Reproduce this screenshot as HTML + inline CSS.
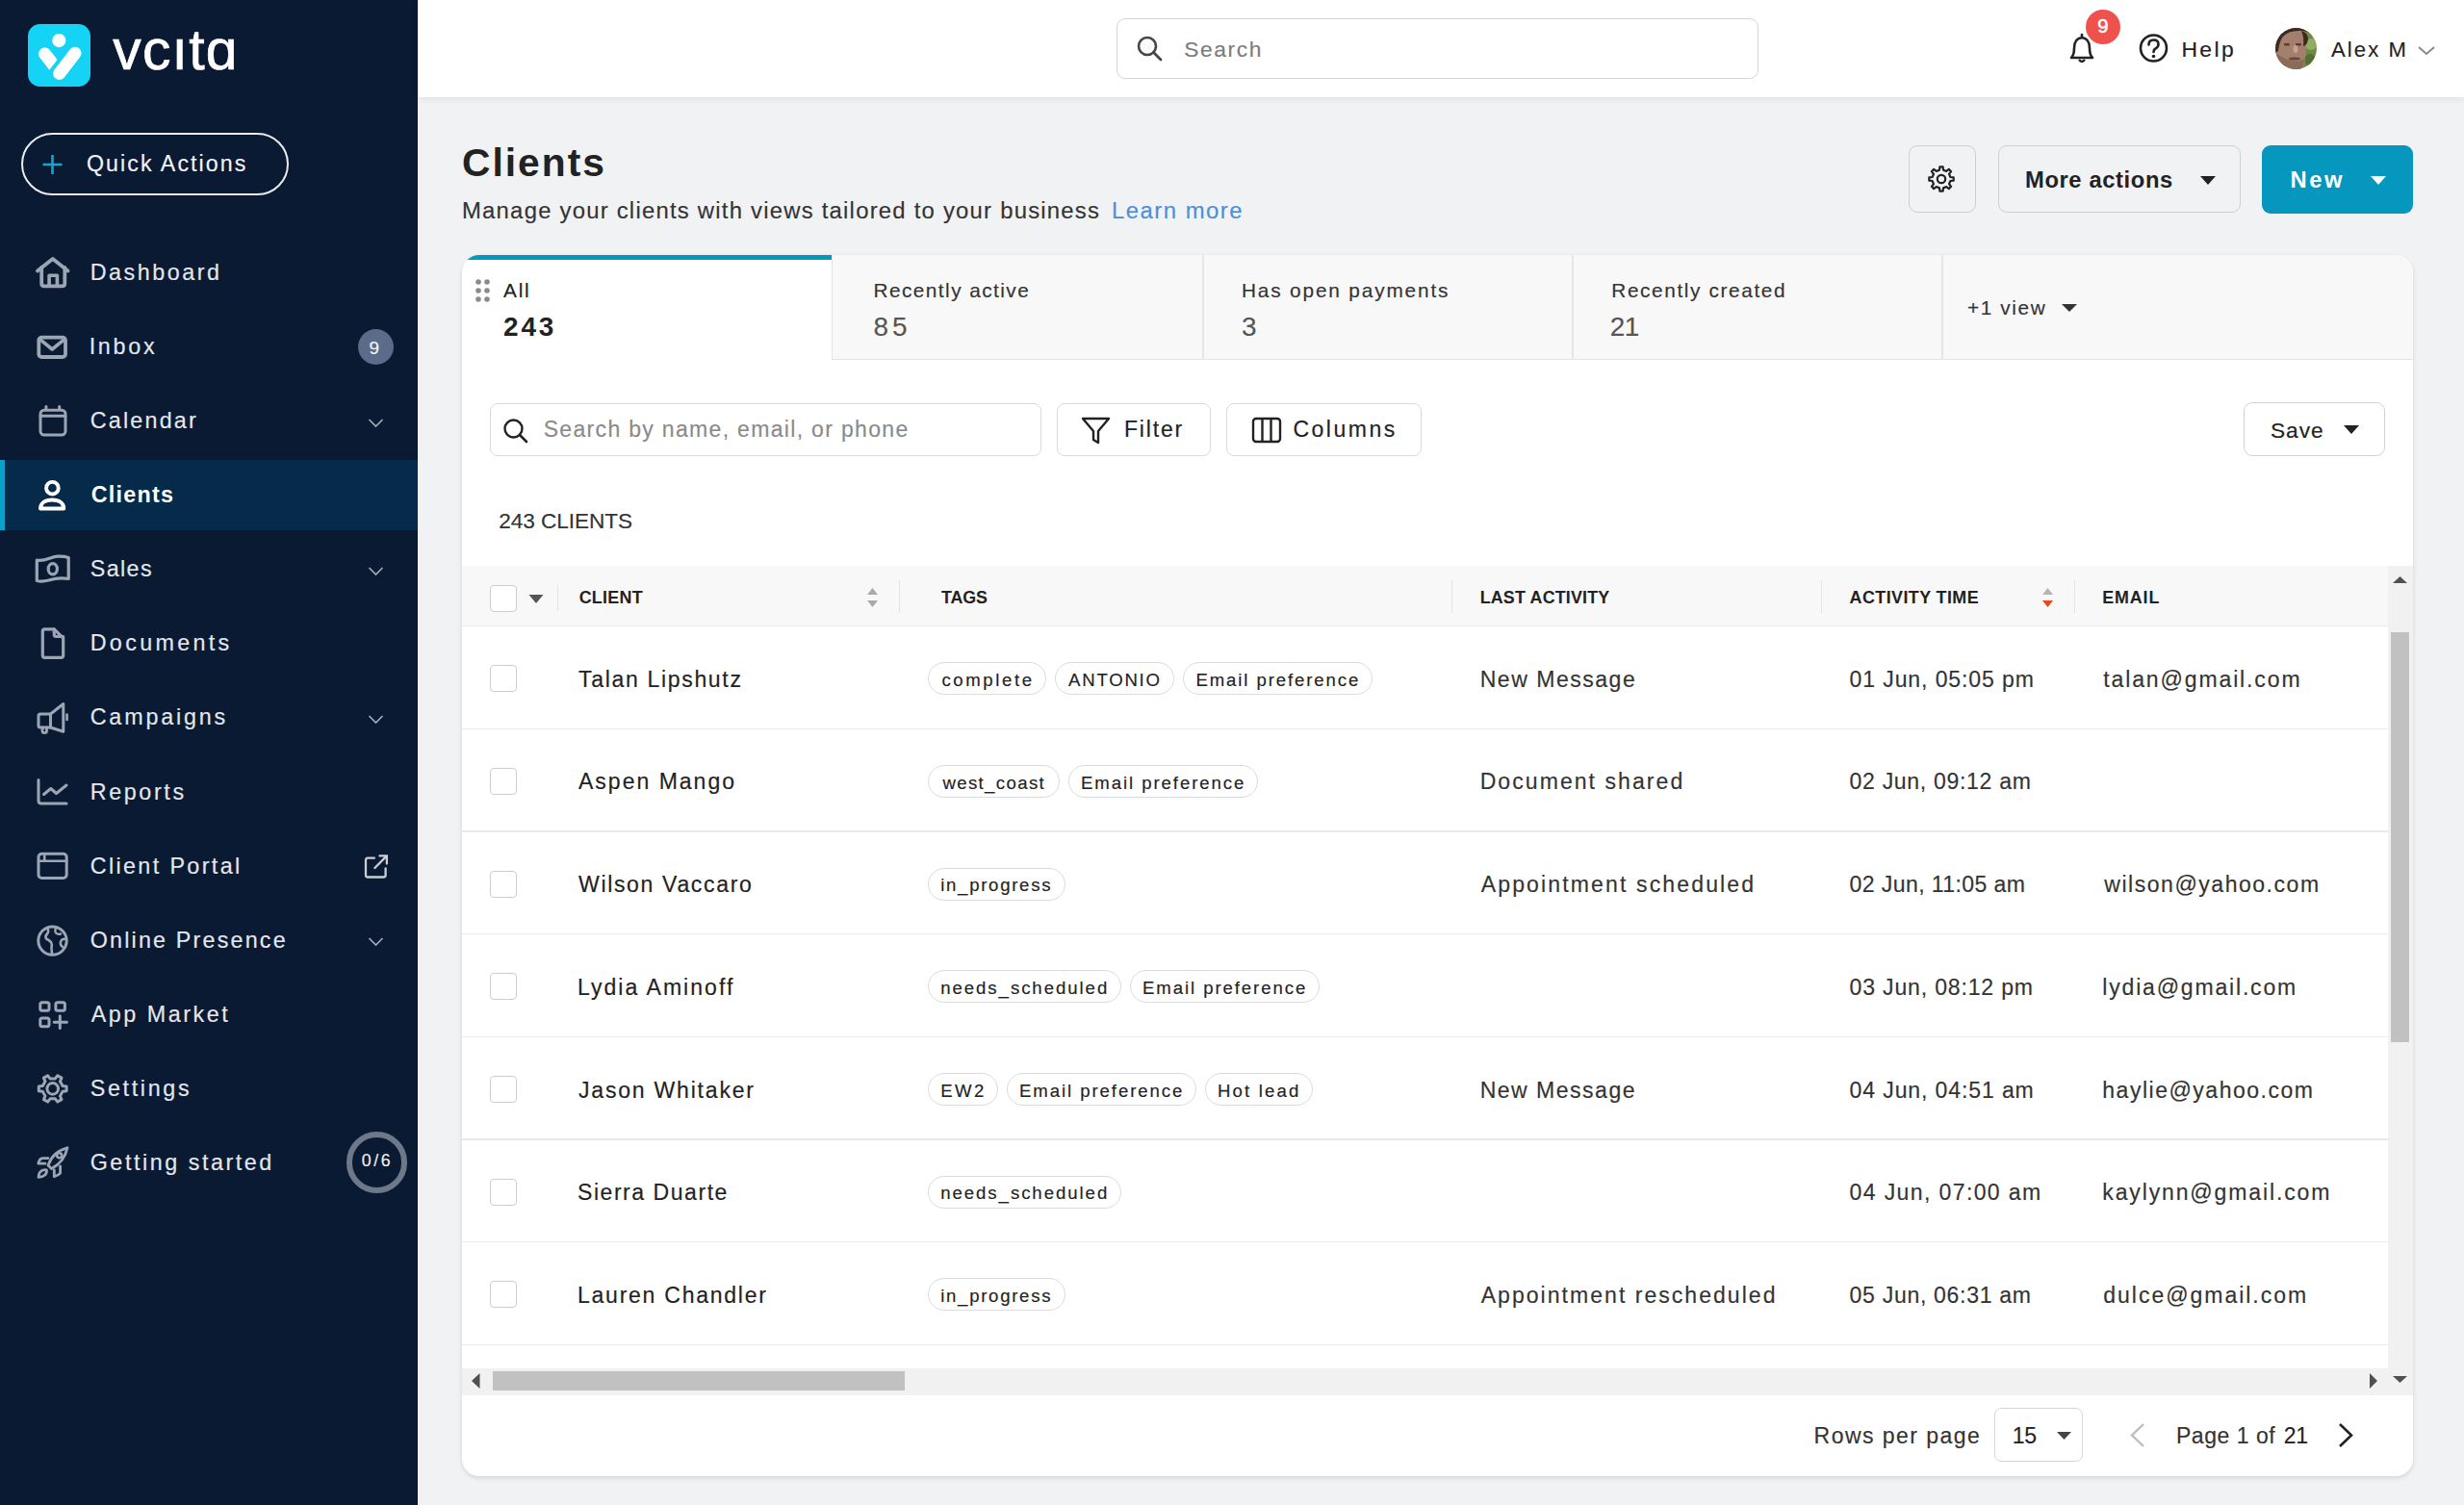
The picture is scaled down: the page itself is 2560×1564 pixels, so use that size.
<!DOCTYPE html>
<html><head><meta charset="utf-8"><title>Clients</title>
<style>
html,body{margin:0;padding:0;}
body{width:2560px;height:1564px;position:relative;overflow:hidden;background:#f1f2f4;font-family:"Liberation Sans",sans-serif;}
.t{position:absolute;line-height:1;white-space:pre;}
</style></head><body>
<div style="position:absolute;left:0px;top:0px;width:434px;height:1564px;background:#0a1a33"></div>
<div style="position:absolute;left:29px;top:25px;width:65px;height:65.3px;background:#15d3f4;border-radius:12.5px"></div>
<svg style="position:absolute;left:29px;top:25px;" width="65" height="65" viewBox="0 0 65 65" fill="none"><defs><clipPath id="lc"><polygon points="62.75,-4.8 -10.45,90.2 -57.97,53.6 15.23,-41.4"/></clipPath></defs><circle cx="32.3" cy="17.1" r="7.1" fill="#fff"/><path d="M17.6 31 L30 47" stroke="#fff" stroke-width="13" stroke-linecap="round" clip-path="url(#lc)"/><path d="M32.6 51.4 L49 30.2" stroke="#fff" stroke-width="13" stroke-linecap="round"/></svg>
<div class="t" style="left:117.20px;top:23.48px;font-size:58.96px;font-weight:400;color:#ffffff;letter-spacing:1.228px;-webkit-text-stroke:0.7px #fff;">vcıtɑ</div>
<div style="position:absolute;left:22px;top:138px;width:278px;height:65px;border:2.5px solid #e9edf2;border-radius:33px;box-sizing:border-box"></div>
<svg style="position:absolute;left:43px;top:160px;" width="23" height="22" viewBox="0 0 23 22" fill="none"><path d="M11.5 1 V21 M1.5 11 H21.5" stroke="#1aa3d0" stroke-width="2.6"/></svg>
<div class="t" style="left:90.00px;top:158.97px;font-size:23.18px;font-weight:400;color:#f2f4f7;letter-spacing:2.077px;-webkit-text-stroke:0.15px #f2f4f7;">Quick Actions</div>
<div style="position:absolute;left:0px;top:478px;width:434px;height:73px;background:#062a49"></div>
<div style="position:absolute;left:0px;top:478px;width:5px;height:73px;background:#0aa2c9"></div>
<div class="t" style="left:93.70px;top:272.30px;font-size:23.32px;font-weight:400;color:#e4e8ee;letter-spacing:2.527px;-webkit-text-stroke:0.15px #e4e8ee;">Dashboard</div>
<div class="t" style="left:92.70px;top:349.33px;font-size:23.32px;font-weight:400;color:#e4e8ee;letter-spacing:2.707px;-webkit-text-stroke:0.15px #e4e8ee;">Inbox</div>
<div class="t" style="left:93.70px;top:426.36px;font-size:23.32px;font-weight:400;color:#e4e8ee;letter-spacing:2.208px;-webkit-text-stroke:0.15px #e4e8ee;">Calendar</div>
<div class="t" style="left:94.70px;top:503.39px;font-size:23.32px;font-weight:700;color:#ffffff;letter-spacing:1.257px;">Clients</div>
<div class="t" style="left:93.70px;top:580.42px;font-size:23.32px;font-weight:400;color:#e4e8ee;letter-spacing:1.410px;-webkit-text-stroke:0.15px #e4e8ee;">Sales</div>
<div class="t" style="left:93.70px;top:657.45px;font-size:23.32px;font-weight:400;color:#e4e8ee;letter-spacing:3.331px;-webkit-text-stroke:0.15px #e4e8ee;">Documents</div>
<div class="t" style="left:93.70px;top:734.48px;font-size:23.32px;font-weight:400;color:#e4e8ee;letter-spacing:2.830px;-webkit-text-stroke:0.15px #e4e8ee;">Campaigns</div>
<div class="t" style="left:93.70px;top:811.51px;font-size:23.32px;font-weight:400;color:#e4e8ee;letter-spacing:2.638px;-webkit-text-stroke:0.15px #e4e8ee;">Reports</div>
<div class="t" style="left:93.70px;top:888.54px;font-size:23.32px;font-weight:400;color:#e4e8ee;letter-spacing:2.375px;-webkit-text-stroke:0.15px #e4e8ee;">Client Portal</div>
<div class="t" style="left:93.70px;top:965.57px;font-size:23.32px;font-weight:400;color:#e4e8ee;letter-spacing:2.187px;-webkit-text-stroke:0.15px #e4e8ee;">Online Presence</div>
<div class="t" style="left:94.70px;top:1042.60px;font-size:23.32px;font-weight:400;color:#e4e8ee;letter-spacing:2.530px;-webkit-text-stroke:0.15px #e4e8ee;">App Market</div>
<div class="t" style="left:93.70px;top:1119.63px;font-size:23.32px;font-weight:400;color:#e4e8ee;letter-spacing:2.660px;-webkit-text-stroke:0.15px #e4e8ee;">Settings</div>
<div class="t" style="left:93.70px;top:1196.66px;font-size:23.32px;font-weight:400;color:#e4e8ee;letter-spacing:2.547px;-webkit-text-stroke:0.15px #e4e8ee;">Getting started</div>
<svg style="position:absolute;left:0;top:0" width="434" height="1564" viewBox="0 0 434 1564"><path d="M39 281.5 L54.8 269 L70.5 281.5" stroke="#9ca5b4" stroke-linecap="round" stroke-linejoin="round" fill="none" stroke-width="3.8"/><path d="M43.2 278 V294.5 Q43.2 297.3 46 297.3 H64.5 Q67.3 297.3 67.3 294.5 V278" stroke="#9ca5b4" stroke-linecap="round" stroke-linejoin="round" fill="none" stroke-width="3.8"/><path d="M51.1 297.3 V286.3 H59.4 V297.3" stroke="#9ca5b4" stroke-linecap="round" stroke-linejoin="round" fill="none" stroke-width="3.6"/><rect x="40.3" y="350.6" width="27.7" height="20.4" rx="3" stroke="#9ca5b4" stroke-linecap="round" stroke-linejoin="round" fill="none" stroke-width="3.8"/><path d="M41.8 352.8 L54.2 363 L66.6 352.8" stroke="#9ca5b4" stroke-linecap="round" stroke-linejoin="round" fill="none" stroke-width="3.6"/><rect x="42" y="426.2" width="26" height="25.9" rx="4" stroke="#9ca5b4" stroke-linecap="round" stroke-linejoin="round" fill="none" stroke-width="3"/><path d="M42 432.3 H68 M47.9 422.6 V425.5 M61.7 422.6 V425.5" stroke="#9ca5b4" stroke-linecap="round" stroke-linejoin="round" fill="none" stroke-width="3"/><circle cx="54.4" cy="507.2" r="6.3" stroke="#fff" stroke-width="3.9" fill="none"/><path d="M42 528.5 C42 522.5 47 519.5 54.2 519.5 C61.3 519.5 66.3 522.5 66.3 528.5 Z" stroke="#fff" stroke-width="3.9" stroke-linejoin="round" fill="none"/><path d="M38.3 582 C46 584 53 578.5 60 578.2 C65 578 68.5 578.6 71.2 579.5 V601.5 C64 600 57 601 50.5 603 C45 604.5 41 604.2 38.3 603.5 Z" stroke="#9ca5b4" stroke-linecap="round" stroke-linejoin="round" fill="none" stroke-width="3.2"/><ellipse cx="54.8" cy="591.3" rx="4.6" ry="5.6" stroke="#9ca5b4" stroke-linecap="round" stroke-linejoin="round" fill="none" stroke-width="3.2"/><path d="M44.3 656 Q44.3 653.8 46.5 653.8 H56.3 L65.7 663.2 V681 Q65.7 683.4 63.3 683.4 H46.5 Q44.3 683.4 44.3 681 Z" stroke="#9ca5b4" stroke-linecap="round" stroke-linejoin="round" fill="none" stroke-width="3.2"/><path d="M56.3 653.8 V659.5 Q56.3 661.5 58.3 661.5 H65.7" stroke="#9ca5b4" stroke-linecap="round" stroke-linejoin="round" fill="none" stroke-width="3.2"/><path d="M42 742 H52.5 V756 H42 Q40 756 40 754 V744 Q40 742 42 742 Z" stroke="#9ca5b4" stroke-linecap="round" stroke-linejoin="round" fill="none" stroke-width="3"/><path d="M52.5 742 L65.8 731.5 V760.2 L52.5 756" stroke="#9ca5b4" stroke-linecap="round" stroke-linejoin="round" fill="none" stroke-width="3"/><path d="M69.6 742.5 V748" stroke="#9ca5b4" stroke-linecap="round" stroke-linejoin="round" fill="none" stroke-width="2.6"/><path d="M44 756 V759.8 Q44 761.6 46.2 761.6 Q48.5 761.6 48.5 759.8 V756" stroke="#9ca5b4" stroke-linecap="round" stroke-linejoin="round" fill="none" stroke-width="2.8"/><path d="M40 810.5 V832 Q40 835 43 835 H69" stroke="#9ca5b4" stroke-linecap="round" stroke-linejoin="round" fill="none" stroke-width="3"/><path d="M45.5 825.5 L52.8 819.5 L58.5 824.5 L69 816" stroke="#9ca5b4" stroke-linecap="round" stroke-linejoin="round" fill="none" stroke-width="3"/><rect x="40" y="887.3" width="29.2" height="25.2" rx="3.5" stroke="#9ca5b4" stroke-linecap="round" stroke-linejoin="round" fill="none" stroke-width="3"/><path d="M40 894.8 H69.2 M46.2 887.5 V894.8" stroke="#9ca5b4" stroke-linecap="round" stroke-linejoin="round" fill="none" stroke-width="2.6"/><circle cx="54.5" cy="977.6" r="14.7" stroke="#9ca5b4" stroke-linecap="round" stroke-linejoin="round" fill="none" stroke-width="3"/><path d="M49.5 964.5 Q51 968 49 970.5 Q46.5 973 48 975.5 Q51 977 53 979 Q54.5 982 53.5 985 L54 991.5" stroke="#9ca5b4" stroke-linecap="round" stroke-linejoin="round" fill="none" stroke-width="2.6"/><path d="M58.5 963.5 Q56.5 967 58 969.5 Q60 971.5 63 970.5" stroke="#9ca5b4" stroke-linecap="round" stroke-linejoin="round" fill="none" stroke-width="2.4"/><path d="M69 976 Q64.5 975 63 978.5 Q62 982 65 984" stroke="#9ca5b4" stroke-linecap="round" stroke-linejoin="round" fill="none" stroke-width="2.4"/><rect x="41.8" y="1041.7" width="9.2" height="8.6" rx="2" stroke="#9ca5b4" stroke-linecap="round" stroke-linejoin="round" fill="none" stroke-width="3"/><rect x="57.9" y="1041.7" width="9.5" height="8.6" rx="2" stroke="#9ca5b4" stroke-linecap="round" stroke-linejoin="round" fill="none" stroke-width="3"/><rect x="41.8" y="1058.1" width="9.2" height="8.6" rx="2" stroke="#9ca5b4" stroke-linecap="round" stroke-linejoin="round" fill="none" stroke-width="3"/><path d="M62.3 1055.8 V1068.6 M56.2 1062.2 H69.4" stroke="#9ca5b4" stroke-linecap="round" stroke-linejoin="round" fill="none" stroke-width="3"/><path d="M65.09 1128.47 L69.10 1129.00 L69.10 1133.80 L65.09 1134.33 L62.44 1138.94 L63.98 1142.67 L59.82 1145.07 L57.36 1141.87 L52.04 1141.87 L49.58 1145.07 L45.42 1142.67 L46.96 1138.94 L44.31 1134.33 L40.30 1133.80 L40.30 1129.00 L44.31 1128.47 L46.96 1123.86 L45.42 1120.13 L49.58 1117.73 L52.04 1120.93 L57.36 1120.93 L59.82 1117.73 L63.98 1120.13 L62.44 1123.86 Z" stroke="#9ca5b4" stroke-linecap="round" stroke-linejoin="round" fill="none" stroke-width="3"/><circle cx="54.7" cy="1131.4" r="5.8" stroke="#9ca5b4" stroke-linecap="round" stroke-linejoin="round" fill="none" stroke-width="3"/><path d="M50 1211 Q55 1196.5 70 1192.8 Q67 1207.5 53.5 1214.5 Z" stroke="#9ca5b4" stroke-linecap="round" stroke-linejoin="round" fill="none" stroke-width="2.8"/><circle cx="61.7" cy="1200.8" r="2.5" stroke="#9ca5b4" stroke-linecap="round" stroke-linejoin="round" fill="none" stroke-width="2.6"/><path d="M50 1203.6 H44.8 Q42 1203.6 40.8 1206.2 L39.8 1209.2 H47" stroke="#9ca5b4" stroke-linecap="round" stroke-linejoin="round" fill="none" stroke-width="2.8"/><path d="M56.3 1216 V1222.8 Q60 1221.5 62.6 1219.2 L62.6 1212" stroke="#9ca5b4" stroke-linecap="round" stroke-linejoin="round" fill="none" stroke-width="2.8"/><path d="M48.3 1215.8 Q44 1215 41.6 1218 Q39.8 1220.6 40 1223.4 Q44 1223.4 46.8 1221 Q49 1218.6 48.3 1215.8 Z" stroke="#9ca5b4" stroke-linecap="round" stroke-linejoin="round" fill="none" stroke-width="2.8"/></svg>
<svg style="position:absolute;left:382px;top:431.76px;" width="18" height="14.0" viewBox="0 0 18 14" fill="none"><path d="M1.5 4 L8.5 11 L15.5 4" stroke="#a3acb8" stroke-width="1.7" fill="none"/></svg>
<svg style="position:absolute;left:382px;top:585.8199999999999px;" width="18" height="14.0" viewBox="0 0 18 14" fill="none"><path d="M1.5 4 L8.5 11 L15.5 4" stroke="#a3acb8" stroke-width="1.7" fill="none"/></svg>
<svg style="position:absolute;left:382px;top:739.88px;" width="18" height="14.0" viewBox="0 0 18 14" fill="none"><path d="M1.5 4 L8.5 11 L15.5 4" stroke="#a3acb8" stroke-width="1.7" fill="none"/></svg>
<svg style="position:absolute;left:382px;top:970.97px;" width="18" height="14.0" viewBox="0 0 18 14" fill="none"><path d="M1.5 4 L8.5 11 L15.5 4" stroke="#a3acb8" stroke-width="1.7" fill="none"/></svg>
<div style="position:absolute;left:372px;top:342px;width:37px;height:37px;background:#5b6b8a;border-radius:50%"></div>
<div class="t" style="left:383.50px;top:353.04px;font-size:18.85px;font-weight:400;color:#f4f6f8;letter-spacing:0.000px;-webkit-text-stroke:0.15px #f4f6f8;">9</div>
<svg style="position:absolute;left:377px;top:887px;" width="28" height="28" viewBox="0 0 28 28" fill="none"><path d="M11.9 4.7 H5 Q3 4.7 3 6.7 V22.5 Q3 24.5 5 24.5 H21.6 Q23.6 24.5 23.6 22.5 V15.4" stroke="#c9ced6" stroke-width="2.3" fill="none" stroke-linecap="round"/><path d="M12.4 15 L24.9 2.4 M17.5 2.4 H24.9 V10.6" stroke="#c9ced6" stroke-width="2.3" fill="none" stroke-linecap="round"/></svg>
<div style="position:absolute;left:359.5px;top:1176.2px;width:63.5px;height:63.5px;border:6.3px solid #6d798b;border-radius:50%;box-sizing:border-box"></div>
<div class="t" style="left:375.80px;top:1198.48px;font-size:17.74px;font-weight:400;color:#eef1f5;letter-spacing:2.611px;-webkit-text-stroke:0.15px #eef1f5;">0/6</div>
<div style="position:absolute;left:434px;top:0px;width:2126px;height:101px;background:#ffffff;box-shadow:0 2px 8px rgba(0,0,0,0.07)"></div>
<div style="position:absolute;left:1160px;top:19px;width:667px;height:63px;border:1.5px solid #d6d6d6;border-radius:9px;box-sizing:border-box;background:#fff"></div>
<svg style="position:absolute;left:1180px;top:36px;" width="30" height="28" viewBox="0 0 30 28" fill="none"><circle cx="12" cy="12" r="9" stroke="#444" stroke-width="2.6" fill="none"/><path d="M18.5 18.5 L26 26" stroke="#444" stroke-width="2.8" stroke-linecap="round"/></svg>
<div class="t" style="left:1230.20px;top:40.22px;font-size:22.77px;font-weight:400;color:#7b7b7b;letter-spacing:1.614px;-webkit-text-stroke:0.15px #7b7b7b;">Search</div>
<svg style="position:absolute;left:2146px;top:32px;" width="34" height="36" viewBox="0 0 34 36" fill="none"><path d="M6 28 Q9 25 9 18 Q9 8 17 7 Q25 8 25 18 Q25 25 28 28 Z" stroke="#222" stroke-width="2.6" fill="none" stroke-linejoin="round"/><path d="M17 4 V7" stroke="#222" stroke-width="2.6" stroke-linecap="round"/><path d="M14 30 Q17 34 20 30" stroke="#222" stroke-width="2.4" fill="none"/></svg>
<div style="position:absolute;left:2167px;top:9.5px;width:36px;height:36.0px;background:#ef524c;border-radius:50%"></div>
<div class="t" style="left:2179.20px;top:17.35px;font-size:20.25px;font-weight:400;color:#ffffff;letter-spacing:0.000px;-webkit-text-stroke:0.5px #fff;">9</div>
<svg style="position:absolute;left:2220px;top:33px;" width="35" height="34" viewBox="0 0 35 34" fill="none"><circle cx="17.5" cy="17" r="13.5" stroke="#222" stroke-width="2.6" fill="none"/><path d="M12.5 13.5 Q12.5 8.5 17.5 8.5 Q22.5 8.5 22.5 13 Q22.5 16 19.5 17.5 Q17.5 18.5 17.5 21" stroke="#222" stroke-width="2.6" fill="none" stroke-linecap="round"/><circle cx="17.5" cy="25.5" r="1.8" fill="#222"/></svg>
<div class="t" style="left:2266.40px;top:40.31px;font-size:22.91px;font-weight:400;color:#222;letter-spacing:2.418px;-webkit-text-stroke:0.15px #222;">Help</div>
<svg style="position:absolute;left:2364px;top:29px;filter:blur(0.5px)" width="43" height="43" viewBox="0 0 43 43" fill="none"><defs><clipPath id="av"><circle cx="21.5" cy="21.5" r="21.4"/></clipPath></defs><g clip-path="url(#av)"><rect x="0" y="0" width="43" height="43" fill="#6d8a45"/><circle cx="37" cy="17" r="6" fill="#9fb36a" opacity="0.8"/><circle cx="36" cy="33" r="6" fill="#4e6a2c" opacity="0.8"/><path d="M0 0 H30 Q33 10 32 22 Q31 38 27 43 H0 Z" fill="#a3806e"/><path d="M0 26 Q4 38 12 43 H27 Q30 38 30 32 Q22 37 13 33 Q6 30 0 26 Z" fill="#8a6a58"/><path d="M0 0 H43 V12 Q38 4 28 3 Q14 2 8 9 Q4 14 3 24 L0 26 Z" fill="#3a2a22"/><path d="M27 3 Q34 5 34 12 Q33 18 29 19 Q30 10 27 3 Z" fill="#3a2a22"/><rect x="9" y="16" width="6" height="2.5" rx="1" fill="#5a3e33"/><rect x="21" y="16" width="6" height="2.5" rx="1" fill="#5a3e33"/><ellipse cx="21" cy="22" rx="2.5" ry="4" fill="#caa190"/><ellipse cx="20" cy="32" rx="6" ry="1.6" fill="#6b463c"/></g></svg>
<div class="t" style="left:2422.00px;top:41.02px;font-size:22.07px;font-weight:400;color:#222;letter-spacing:2.097px;-webkit-text-stroke:0.15px #222;">Alex M</div>
<svg style="position:absolute;left:2510px;top:45px;" width="22" height="15" viewBox="0 0 22 15" fill="none"><path d="M3 4 L11 11 L19 4" stroke="#888" stroke-width="2" fill="none"/></svg>
<!--main-->
<div class="t" style="left:480.00px;top:149.47px;font-size:40.78px;font-weight:700;color:#222;letter-spacing:2.010px;">Clients</div>
<div class="t" style="left:480.00px;top:207.48px;font-size:23.88px;font-weight:400;color:#333;letter-spacing:1.226px;-webkit-text-stroke:0.15px #333;">Manage your clients with views tailored to your business</div>
<div class="t" style="left:1155.00px;top:207.48px;font-size:23.88px;font-weight:400;color:#4b8fdb;letter-spacing:1.499px;-webkit-text-stroke:0.15px #4b8fdb;">Learn more</div>
<div style="position:absolute;left:1983px;top:151px;width:70px;height:70px;border:1.5px solid #cfcfcf;border-radius:9px;box-sizing:border-box"></div>
<svg style="position:absolute;left:2002px;top:171px;" width="30" height="30" viewBox="0 0 30 30" fill="none"><path d="M24.38 12.98 L27.70 13.37 L27.70 16.63 L24.38 17.02 L23.07 20.20 L25.13 22.83 L22.83 25.13 L20.20 23.07 L17.02 24.38 L16.63 27.70 L13.37 27.70 L12.98 24.38 L9.80 23.07 L7.17 25.13 L4.87 22.83 L6.93 20.20 L5.62 17.02 L2.30 16.63 L2.30 13.37 L5.62 12.98 L6.93 9.80 L4.87 7.17 L7.17 4.87 L9.80 6.93 L12.98 5.62 L13.37 2.30 L16.63 2.30 L17.02 5.62 L20.20 6.93 L22.83 4.87 L25.13 7.17 L23.07 9.80 Z" stroke="#222" stroke-width="2.2" fill="none" stroke-linejoin="round"/><circle cx="15" cy="15" r="4.2" stroke="#222" stroke-width="2.2" fill="none"/></svg>
<div style="position:absolute;left:2076px;top:151px;width:252px;height:70px;border:1.5px solid #cfcfcf;border-radius:9px;box-sizing:border-box"></div>
<div class="t" style="left:2104.00px;top:175.60px;font-size:23.74px;font-weight:700;color:#222;letter-spacing:0.619px;">More actions</div>
<svg style="position:absolute;left:2285px;top:182px;" width="18" height="11" viewBox="0 0 18 11" fill="none"><path d="M1 1 H17 L9 10 Z" fill="#222"/></svg>
<div style="position:absolute;left:2350px;top:151px;width:157px;height:71px;background:#0597be;border-radius:9px"></div>
<div class="t" style="left:2379.50px;top:175.60px;font-size:23.74px;font-weight:700;color:#ffffff;letter-spacing:2.580px;">New</div>
<svg style="position:absolute;left:2462px;top:182px;" width="18" height="11" viewBox="0 0 18 11" fill="none"><path d="M1 1 H17 L9 10 Z" fill="#fff"/></svg>
<div style="position:absolute;left:480px;top:265px;width:2027px;height:1269px;background:#fff;border-radius:18px;box-shadow:0 2px 5px rgba(0,0,0,0.12);overflow:hidden">
<div style="position:absolute;left:384px;top:0px;width:1643px;height:109px;background:#f8f8f8;border-bottom:1.5px solid #e4e4e4;border-left:1.5px solid #e4e4e4;box-sizing:border-box"></div>
<div style="position:absolute;left:769px;top:0px;width:1.5px;height:109px;background:#e6e6e6"></div>
<div style="position:absolute;left:1153px;top:0px;width:1.5px;height:109px;background:#e6e6e6"></div>
<div style="position:absolute;left:1537px;top:0px;width:1.5px;height:109px;background:#e6e6e6"></div>
<div style="position:absolute;left:0px;top:0px;width:384px;height:5px;background:#0597be"></div>
</div>
<svg style="position:absolute;left:492px;top:288px;" width="20" height="29" viewBox="0 0 20 29" fill="none"><circle cx="5" cy="5" r="2.8" fill="#8a8a8a"/><circle cx="14" cy="5" r="2.8" fill="#8a8a8a"/><circle cx="5" cy="14" r="2.8" fill="#8a8a8a"/><circle cx="14" cy="14" r="2.8" fill="#8a8a8a"/><circle cx="5" cy="23" r="2.8" fill="#8a8a8a"/><circle cx="14" cy="23" r="2.8" fill="#8a8a8a"/></svg>
<div class="t" style="left:523.00px;top:292.18px;font-size:20.81px;font-weight:400;color:#222;letter-spacing:1.754px;-webkit-text-stroke:0.15px #222;">All</div>
<div class="t" style="left:523.00px;top:326.35px;font-size:27.93px;font-weight:700;color:#222;letter-spacing:2.871px;">243</div>
<div class="t" style="left:907.50px;top:292.18px;font-size:20.81px;font-weight:400;color:#333;letter-spacing:1.446px;-webkit-text-stroke:0.15px #333;">Recently active</div>
<div class="t" style="left:907.50px;top:326.35px;font-size:27.93px;font-weight:400;color:#555;letter-spacing:4.071px;-webkit-text-stroke:0.15px #555;">85</div>
<div class="t" style="left:1290.00px;top:292.18px;font-size:20.81px;font-weight:400;color:#333;letter-spacing:1.839px;-webkit-text-stroke:0.15px #333;">Has open payments</div>
<div class="t" style="left:1290.00px;top:326.35px;font-size:27.93px;font-weight:400;color:#555;letter-spacing:0.000px;-webkit-text-stroke:0.15px #555;">3</div>
<div class="t" style="left:1674.30px;top:292.18px;font-size:20.81px;font-weight:400;color:#333;letter-spacing:1.614px;-webkit-text-stroke:0.15px #333;">Recently created</div>
<div class="t" style="left:1672.74px;top:326.35px;font-size:27.93px;font-weight:400;color:#555;letter-spacing:-0.400px;-webkit-text-stroke:0.15px #555;">21</div>
<div class="t" style="left:2044.00px;top:310.38px;font-size:20.81px;font-weight:400;color:#333;letter-spacing:1.604px;-webkit-text-stroke:0.15px #333;">+1 view</div>
<svg style="position:absolute;left:2140px;top:315px;" width="20" height="10" viewBox="0 0 18 10" fill="none"><path d="M1 1 H17 L9 9 Z" fill="#333"/></svg>
<div style="position:absolute;left:509px;top:419px;width:573px;height:55px;border:1.5px solid #dadada;border-radius:8px;box-sizing:border-box"></div>
<svg style="position:absolute;left:522px;top:434px;" width="30" height="28" viewBox="0 0 30 28" fill="none"><circle cx="11.5" cy="11.5" r="9" stroke="#222" stroke-width="2.4" fill="none"/><path d="M18 18 L25 25" stroke="#222" stroke-width="2.6" stroke-linecap="round"/></svg>
<div class="t" style="left:564.70px;top:435.49px;font-size:23.04px;font-weight:400;color:#8a8a8a;letter-spacing:1.308px;-webkit-text-stroke:0.15px #8a8a8a;">Search by name, email, or phone</div>
<div style="position:absolute;left:1098px;top:419px;width:160px;height:55px;border:1.5px solid #dadada;border-radius:8px;box-sizing:border-box"></div>
<svg style="position:absolute;left:1122px;top:431px;" width="34" height="32" viewBox="0 0 34 32" fill="none"><path d="M3 4 H30 L19 17 V29 L14 26 V17 Z" stroke="#222" stroke-width="2.4" fill="none" stroke-linejoin="round"/></svg>
<div class="t" style="left:1168.00px;top:435.49px;font-size:23.04px;font-weight:400;color:#222;letter-spacing:1.798px;-webkit-text-stroke:0.15px #222;">Filter</div>
<div style="position:absolute;left:1274px;top:419px;width:203px;height:55px;border:1.5px solid #dadada;border-radius:8px;box-sizing:border-box"></div>
<svg style="position:absolute;left:1299px;top:432px;" width="34" height="30" viewBox="0 0 34 30" fill="none"><rect x="3" y="3" width="28" height="24" rx="3" stroke="#222" stroke-width="2.4" fill="none"/><path d="M12.5 3 V27 M21.5 3 V27" stroke="#222" stroke-width="2.4"/></svg>
<div class="t" style="left:1343.40px;top:435.49px;font-size:23.04px;font-weight:400;color:#222;letter-spacing:2.490px;-webkit-text-stroke:0.15px #222;">Columns</div>
<div style="position:absolute;left:2331px;top:418px;width:147px;height:56px;border:1.5px solid #d2d2d2;border-radius:9px;box-sizing:border-box"></div>
<div class="t" style="left:2359.00px;top:435.72px;font-size:22.77px;font-weight:400;color:#222;letter-spacing:0.933px;-webkit-text-stroke:0.15px #222;">Save</div>
<svg style="position:absolute;left:2434px;top:441px;" width="18" height="11" viewBox="0 0 18 11" fill="none"><path d="M1 1 H17 L9 10 Z" fill="#222"/></svg>
<div class="t" style="left:518.30px;top:530.84px;font-size:22.63px;font-weight:400;color:#333;letter-spacing:-0.091px;-webkit-text-stroke:0.15px #333;">243 CLIENTS</div>
<div style="position:absolute;left:480px;top:588px;width:2001px;height:63px;background:#f8f8f8;border-bottom:1.5px solid #ececec;box-sizing:border-box"></div>
<div style="position:absolute;left:509px;top:608px;width:28px;height:28px;border:1.5px solid #cdcdcd;border-radius:4px;box-sizing:border-box;background:#fff"></div>
<svg style="position:absolute;left:548px;top:617px;" width="18" height="11" viewBox="0 0 17 11" fill="none"><path d="M1 1 H16 L8.5 10 Z" fill="#555"/></svg>
<div style="position:absolute;left:579px;top:608px;width:1.2000000000000455px;height:27px;background:#e4e4e4"></div>
<div style="position:absolute;left:934px;top:603px;width:1.2000000000000455px;height:34px;background:#e4e4e4"></div>
<div style="position:absolute;left:1508px;top:603px;width:1.2000000000000455px;height:34px;background:#e4e4e4"></div>
<div style="position:absolute;left:1892px;top:603px;width:1.2000000000000455px;height:34px;background:#e4e4e4"></div>
<div style="position:absolute;left:2155px;top:603px;width:1.199999999999818px;height:34px;background:#e4e4e4"></div>
<div class="t" style="left:601.70px;top:612.66px;font-size:17.88px;font-weight:700;color:#222;letter-spacing:0.284px;">CLIENT</div>
<div class="t" style="left:978.00px;top:612.66px;font-size:17.88px;font-weight:700;color:#222;letter-spacing:-0.124px;">TAGS</div>
<div class="t" style="left:1537.70px;top:612.66px;font-size:17.88px;font-weight:700;color:#222;letter-spacing:0.188px;">LAST ACTIVITY</div>
<div class="t" style="left:1921.60px;top:612.66px;font-size:17.88px;font-weight:700;color:#222;letter-spacing:0.444px;">ACTIVITY TIME</div>
<div class="t" style="left:2184.30px;top:612.66px;font-size:17.88px;font-weight:700;color:#222;letter-spacing:0.863px;">EMAIL</div>
<svg style="position:absolute;left:899px;top:610px;" width="15" height="22" viewBox="0 0 15 22" fill="none"><path d="M7.5 1 L13 8 H2 Z" fill="#aaa"/><path d="M7.5 21 L13 14 H2 Z" fill="#aaa"/></svg>
<svg style="position:absolute;left:2120px;top:610px;" width="15" height="22" viewBox="0 0 15 22" fill="none"><path d="M7.5 1 L13 8 H2 Z" fill="#b5b5b5"/><path d="M7.5 21 L13 14 H2 Z" fill="#e8491d"/></svg>
<div style="position:absolute;left:480px;top:756.67px;width:2001px;height:1.2000000000000455px;background:#e9e9ea"></div>
<div style="position:absolute;left:509px;top:691.335px;width:28px;height:28.0px;border:1.5px solid #cdcdcd;border-radius:4px;box-sizing:border-box"></div>
<div class="t" style="left:601.00px;top:694.82px;font-size:23.04px;font-weight:400;color:#222;letter-spacing:1.667px;-webkit-text-stroke:0.15px #222;">Talan Lipshutz</div>
<div style="position:absolute;left:964.4px;top:688.335px;width:122.80000000000007px;height:34.0px;border:1.5px solid #d9dbe0;border-radius:17px;box-sizing:border-box"></div>
<div class="t" style="left:978.40px;top:697.91px;font-size:18.58px;font-weight:400;color:#222;letter-spacing:2.615px;-webkit-text-stroke:0.15px #222;">complete</div>
<div style="position:absolute;left:1096px;top:688.335px;width:124px;height:34.0px;border:1.5px solid #d9dbe0;border-radius:17px;box-sizing:border-box"></div>
<div class="t" style="left:1110.00px;top:697.91px;font-size:18.58px;font-weight:400;color:#222;letter-spacing:1.785px;-webkit-text-stroke:0.15px #222;">ANTONIO</div>
<div style="position:absolute;left:1229.4px;top:688.335px;width:197.0px;height:34.0px;border:1.5px solid #d9dbe0;border-radius:17px;box-sizing:border-box"></div>
<div class="t" style="left:1242.40px;top:697.91px;font-size:18.58px;font-weight:400;color:#222;letter-spacing:1.901px;-webkit-text-stroke:0.15px #222;">Email preference</div>
<div class="t" style="left:1537.70px;top:694.82px;font-size:23.04px;font-weight:400;color:#333;letter-spacing:1.508px;-webkit-text-stroke:0.15px #333;">New Message</div>
<div class="t" style="left:1921.60px;top:694.82px;font-size:23.04px;font-weight:400;color:#333;letter-spacing:0.887px;-webkit-text-stroke:0.15px #333;">01 Jun, 05:05 pm</div>
<div class="t" style="left:2185.30px;top:694.82px;font-size:23.04px;font-weight:400;color:#333;letter-spacing:1.858px;-webkit-text-stroke:0.15px #333;">talan@gmail.com</div>
<div style="position:absolute;left:480px;top:863.34px;width:2001px;height:1.1999999999999318px;background:#e9e9ea"></div>
<div style="position:absolute;left:509px;top:798.005px;width:28px;height:28.0px;border:1.5px solid #cdcdcd;border-radius:4px;box-sizing:border-box"></div>
<div class="t" style="left:601.00px;top:801.49px;font-size:23.04px;font-weight:400;color:#222;letter-spacing:1.989px;-webkit-text-stroke:0.15px #222;">Aspen Mango</div>
<div style="position:absolute;left:964.4px;top:795.005px;width:136.60000000000002px;height:34.0px;border:1.5px solid #d9dbe0;border-radius:17px;box-sizing:border-box"></div>
<div class="t" style="left:979.40px;top:804.58px;font-size:18.58px;font-weight:400;color:#222;letter-spacing:1.378px;-webkit-text-stroke:0.15px #222;">west_coast</div>
<div style="position:absolute;left:1110px;top:795.005px;width:197.4000000000001px;height:34.0px;border:1.5px solid #d9dbe0;border-radius:17px;box-sizing:border-box"></div>
<div class="t" style="left:1123.00px;top:804.58px;font-size:18.58px;font-weight:400;color:#222;letter-spacing:1.927px;-webkit-text-stroke:0.15px #222;">Email preference</div>
<div class="t" style="left:1537.70px;top:801.49px;font-size:23.04px;font-weight:400;color:#333;letter-spacing:2.052px;-webkit-text-stroke:0.15px #333;">Document shared</div>
<div class="t" style="left:1921.60px;top:801.49px;font-size:23.04px;font-weight:400;color:#333;letter-spacing:0.687px;-webkit-text-stroke:0.15px #333;">02 Jun, 09:12 am</div>
<div style="position:absolute;left:480px;top:970.01px;width:2001px;height:1.2000000000000455px;background:#e9e9ea"></div>
<div style="position:absolute;left:509px;top:904.6750000000001px;width:28px;height:28.0px;border:1.5px solid #cdcdcd;border-radius:4px;box-sizing:border-box"></div>
<div class="t" style="left:601.00px;top:908.16px;font-size:23.04px;font-weight:400;color:#222;letter-spacing:1.656px;-webkit-text-stroke:0.15px #222;">Wilson Vaccaro</div>
<div style="position:absolute;left:964.2px;top:901.6750000000001px;width:142.39999999999986px;height:34.0px;border:1.5px solid #d9dbe0;border-radius:17px;box-sizing:border-box"></div>
<div class="t" style="left:977.20px;top:911.25px;font-size:18.58px;font-weight:400;color:#222;letter-spacing:1.719px;-webkit-text-stroke:0.15px #222;">in_progress</div>
<div class="t" style="left:1538.70px;top:908.16px;font-size:23.04px;font-weight:400;color:#333;letter-spacing:2.135px;-webkit-text-stroke:0.15px #333;">Appointment scheduled</div>
<div class="t" style="left:1921.60px;top:908.16px;font-size:23.04px;font-weight:400;color:#333;letter-spacing:0.401px;-webkit-text-stroke:0.15px #333;">02 Jun, 11:05 am</div>
<div class="t" style="left:2186.30px;top:908.16px;font-size:23.04px;font-weight:400;color:#333;letter-spacing:1.516px;-webkit-text-stroke:0.15px #333;">wilson@yahoo.com</div>
<div style="position:absolute;left:480px;top:1076.68px;width:2001px;height:1.2000000000000455px;background:#e9e9ea"></div>
<div style="position:absolute;left:509px;top:1011.345px;width:28px;height:28.0px;border:1.5px solid #cdcdcd;border-radius:4px;box-sizing:border-box"></div>
<div class="t" style="left:600.00px;top:1014.83px;font-size:23.04px;font-weight:400;color:#222;letter-spacing:2.028px;-webkit-text-stroke:0.15px #222;">Lydia Aminoff</div>
<div style="position:absolute;left:964.2px;top:1008.345px;width:201.0999999999999px;height:34.0px;border:1.5px solid #d9dbe0;border-radius:17px;box-sizing:border-box"></div>
<div class="t" style="left:977.20px;top:1017.92px;font-size:18.58px;font-weight:400;color:#222;letter-spacing:1.957px;-webkit-text-stroke:0.15px #222;">needs_scheduled</div>
<div style="position:absolute;left:1174px;top:1008.345px;width:197.29999999999995px;height:34.0px;border:1.5px solid #d9dbe0;border-radius:17px;box-sizing:border-box"></div>
<div class="t" style="left:1187.00px;top:1017.92px;font-size:18.58px;font-weight:400;color:#222;letter-spacing:1.921px;-webkit-text-stroke:0.15px #222;">Email preference</div>
<div class="t" style="left:1921.60px;top:1014.83px;font-size:23.04px;font-weight:400;color:#333;letter-spacing:0.827px;-webkit-text-stroke:0.15px #333;">03 Jun, 08:12 pm</div>
<div class="t" style="left:2184.30px;top:1014.83px;font-size:23.04px;font-weight:400;color:#333;letter-spacing:1.800px;-webkit-text-stroke:0.15px #333;">lydia@gmail.com</div>
<div style="position:absolute;left:480px;top:1183.35px;width:2001px;height:1.2000000000000455px;background:#e9e9ea"></div>
<div style="position:absolute;left:509px;top:1118.015px;width:28px;height:28.0px;border:1.5px solid #cdcdcd;border-radius:4px;box-sizing:border-box"></div>
<div class="t" style="left:601.00px;top:1121.50px;font-size:23.04px;font-weight:400;color:#222;letter-spacing:1.788px;-webkit-text-stroke:0.15px #222;">Jason Whitaker</div>
<div style="position:absolute;left:964.2px;top:1115.015px;width:73.29999999999995px;height:34.0px;border:1.5px solid #d9dbe0;border-radius:17px;box-sizing:border-box"></div>
<div class="t" style="left:977.20px;top:1124.59px;font-size:18.58px;font-weight:400;color:#222;letter-spacing:2.449px;-webkit-text-stroke:0.15px #222;">EW2</div>
<div style="position:absolute;left:1046px;top:1115.015px;width:197.4000000000001px;height:34.0px;border:1.5px solid #d9dbe0;border-radius:17px;box-sizing:border-box"></div>
<div class="t" style="left:1059.00px;top:1124.59px;font-size:18.58px;font-weight:400;color:#222;letter-spacing:1.927px;-webkit-text-stroke:0.15px #222;">Email preference</div>
<div style="position:absolute;left:1252px;top:1115.015px;width:112.40000000000009px;height:34.0px;border:1.5px solid #d9dbe0;border-radius:17px;box-sizing:border-box"></div>
<div class="t" style="left:1265.00px;top:1124.59px;font-size:18.58px;font-weight:400;color:#222;letter-spacing:2.155px;-webkit-text-stroke:0.15px #222;">Hot lead</div>
<div class="t" style="left:1537.70px;top:1121.50px;font-size:23.04px;font-weight:400;color:#333;letter-spacing:1.488px;-webkit-text-stroke:0.15px #333;">New Message</div>
<div class="t" style="left:1921.60px;top:1121.50px;font-size:23.04px;font-weight:400;color:#333;letter-spacing:0.881px;-webkit-text-stroke:0.15px #333;">04 Jun, 04:51 am</div>
<div class="t" style="left:2184.30px;top:1121.50px;font-size:23.04px;font-weight:400;color:#333;letter-spacing:1.498px;-webkit-text-stroke:0.15px #333;">haylie@yahoo.com</div>
<div style="position:absolute;left:480px;top:1290.02px;width:2001px;height:1.2000000000000455px;background:#e9e9ea"></div>
<div style="position:absolute;left:509px;top:1224.685px;width:28px;height:28.0px;border:1.5px solid #cdcdcd;border-radius:4px;box-sizing:border-box"></div>
<div class="t" style="left:600.00px;top:1228.17px;font-size:23.04px;font-weight:400;color:#222;letter-spacing:1.537px;-webkit-text-stroke:0.15px #222;">Sierra Duarte</div>
<div style="position:absolute;left:964.2px;top:1221.685px;width:201.0999999999999px;height:34.0px;border:1.5px solid #d9dbe0;border-radius:17px;box-sizing:border-box"></div>
<div class="t" style="left:977.20px;top:1231.26px;font-size:18.58px;font-weight:400;color:#222;letter-spacing:1.957px;-webkit-text-stroke:0.15px #222;">needs_scheduled</div>
<div class="t" style="left:1921.60px;top:1228.17px;font-size:23.04px;font-weight:400;color:#333;letter-spacing:1.374px;-webkit-text-stroke:0.15px #333;">04 Jun, 07:00 am</div>
<div class="t" style="left:2184.30px;top:1228.17px;font-size:23.04px;font-weight:400;color:#333;letter-spacing:1.854px;-webkit-text-stroke:0.15px #333;">kaylynn@gmail.com</div>
<div style="position:absolute;left:480px;top:1396.69px;width:2001px;height:1.2000000000000455px;background:#e9e9ea"></div>
<div style="position:absolute;left:509px;top:1331.355px;width:28px;height:28.0px;border:1.5px solid #cdcdcd;border-radius:4px;box-sizing:border-box"></div>
<div class="t" style="left:600.00px;top:1334.84px;font-size:23.04px;font-weight:400;color:#222;letter-spacing:1.735px;-webkit-text-stroke:0.15px #222;">Lauren Chandler</div>
<div style="position:absolute;left:964.2px;top:1328.355px;width:142.39999999999986px;height:34.0px;border:1.5px solid #d9dbe0;border-radius:17px;box-sizing:border-box"></div>
<div class="t" style="left:977.20px;top:1337.93px;font-size:18.58px;font-weight:400;color:#222;letter-spacing:1.719px;-webkit-text-stroke:0.15px #222;">in_progress</div>
<div class="t" style="left:1538.70px;top:1334.84px;font-size:23.04px;font-weight:400;color:#333;letter-spacing:2.028px;-webkit-text-stroke:0.15px #333;">Appointment rescheduled</div>
<div class="t" style="left:1921.60px;top:1334.84px;font-size:23.04px;font-weight:400;color:#333;letter-spacing:0.694px;-webkit-text-stroke:0.15px #333;">05 Jun, 06:31 am</div>
<div class="t" style="left:2185.30px;top:1334.84px;font-size:23.04px;font-weight:400;color:#333;letter-spacing:1.957px;-webkit-text-stroke:0.15px #333;">dulce@gmail.com</div>
<div style="position:absolute;left:480px;top:1422px;width:2001px;height:28px;background:#f1f1f1"></div>
<div style="position:absolute;left:512px;top:1425.4px;width:427.5px;height:19.199999999999818px;background:#c1c1c1"></div>
<svg style="position:absolute;left:489px;top:1426px;" width="11" height="18" viewBox="0 0 11 18" fill="none"><path d="M9.5 1 V17 L1 9 Z" fill="#505050"/></svg>
<svg style="position:absolute;left:2461px;top:1426px;" width="10" height="18" viewBox="0 0 10 18" fill="none"><path d="M1 1 V17 L9 9 Z" fill="#505050"/></svg>
<div style="position:absolute;left:2481px;top:588px;width:26px;height:862px;background:#f1f1f1"></div>
<div style="position:absolute;left:2484px;top:656.6px;width:19px;height:426.4px;background:#c1c1c1"></div>
<svg style="position:absolute;left:2485px;top:598px;" width="17" height="9" viewBox="0 0 17 9" fill="none"><path d="M1 8 H16 L8.5 1 Z" fill="#505050"/></svg>
<svg style="position:absolute;left:2485px;top:1429px;" width="17" height="9" viewBox="0 0 17 9" fill="none"><path d="M1 1 H16 L8.5 8 Z" fill="#505050"/></svg>
<div class="t" style="left:1884.60px;top:1480.79px;font-size:23.04px;font-weight:400;color:#333;letter-spacing:1.442px;-webkit-text-stroke:0.15px #333;">Rows per page</div>
<div style="position:absolute;left:2071.6px;top:1463.4px;width:92.90000000000009px;height:55.34999999999991px;border:1.5px solid #d3d6de;border-radius:7px;box-sizing:border-box"></div>
<div class="t" style="left:2090.80px;top:1480.79px;font-size:23.04px;font-weight:400;color:#222;letter-spacing:-0.400px;-webkit-text-stroke:0.15px #222;">15</div>
<svg style="position:absolute;left:2136px;top:1487px;" width="17" height="10" viewBox="0 0 17 10" fill="none"><path d="M1 1 H16 L8.5 9 Z" fill="#444"/></svg>
<svg style="position:absolute;left:2210px;top:1477px;" width="22" height="29" viewBox="0 0 22 29" fill="none"><path d="M17 3 L5 14.5 L17 26" stroke="#bdbdbd" stroke-width="2.4" fill="none"/></svg>
<div class="t" style="left:2261.00px;top:1480.79px;font-size:23.04px;font-weight:400;color:#333;letter-spacing:0.512px;-webkit-text-stroke:0.15px #333;">Page 1 of</div>
<div class="t" style="left:2372.80px;top:1480.79px;font-size:23.04px;font-weight:400;color:#222;letter-spacing:-0.400px;-webkit-text-stroke:0.15px #222;">21</div>
<svg style="position:absolute;left:2426px;top:1477px;" width="22" height="29" viewBox="0 0 22 29" fill="none"><path d="M5 3 L17 14.5 L5 26" stroke="#222" stroke-width="2.6" fill="none"/></svg>
</body></html>
